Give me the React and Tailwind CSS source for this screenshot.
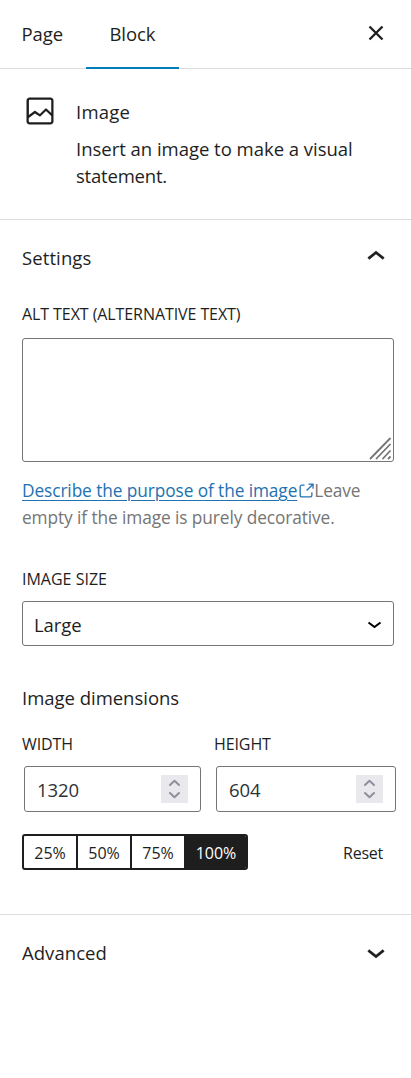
const Chevron = ({ up, className }) => (
  <svg viewBox="0 0 24 24" fill="currentColor" stroke="currentColor" strokeWidth=".3" className={className}>
    {up ? (
      <path d="M6.5 12.4L12 8l5.5 4.4-.9 1.2L12 10l-4.5 3.6-1-1.2z" />
    ) : (
      <path d="M17.5 11.6L12 16l-5.5-4.4.9-1.2L12 14l4.5-3.6 1 1.2z" />
    )}
  </svg>
);

const Label = ({ children, className }) => (
  <div className={`h-6 text-[16px] leading-6 whitespace-nowrap ${className}`}>{children}</div>
);

const NumberField = ({ value, className }) => (
  <div className={`flex h-[46px] items-center justify-between rounded-[3px] border border-[#757575] pr-3 pl-3 ${className}`}>
    <span className="pt-0.5 text-[18.5px] leading-6 tracking-[-0.1px] text-[#2c3338]">{value}</span>
    <span className="flex h-7 w-[27px] items-center justify-center bg-[#e9e9ed]">
      <svg viewBox="0 0 27 28" className="h-7 w-[27px]" fill="none" stroke="#8f8f9d" strokeWidth="2" strokeLinecap="round" strokeLinejoin="round">
        <path d="M9 10l4.500-4.300L18 10M9 18l4.500 4.300L18 18" />
      </svg>
    </span>
  </div>
);

const scales = [
  { label: "25%", style: "w-[54px] border-r-2" },
  { label: "50%", style: "w-[54px] border-r-2" },
  { label: "75%", style: "w-[52px]" },
  { label: "100%", style: "w-[62px] bg-[#1e1e1e] pl-0.5 text-white" },
];

export default function App() {
  return (
    <div className="h-[1078px] w-[411px] overflow-hidden bg-white font-['Open_Sans','Noto_Sans',sans-serif] text-[18.5px] leading-[27px] text-[#1e1e1e]">
      <header className="flex h-[69px] border-b border-[#ddd]">
        <div className="w-[86px] pt-5 pl-[21.5px] tracking-[-0.1px]">Page</div>
        <div className="h-[69px] w-[93px] border-b-2 border-[#007cba] pt-5 text-center tracking-[-0.05px]">Block</div>
        <div className="flex flex-1 items-start justify-end pt-[15px] pr-[17px]">
          <svg viewBox="0 0 36 36" className="size-9" fill="none" stroke="currentColor" strokeWidth="2.3">
            <path d="M11.500 11.500l13 13M24.500 11.500l-13 13" />
          </svg>
        </div>
      </header>

      <section className="flex h-[151px] border-b border-[#ddd] pt-[24px] pl-[22px]">
        <svg viewBox="0 0 24 24" className="size-9 shrink-0" fill="currentColor">
          <path d="M19 3H5c-1.1 0-2 .9-2 2v14c0 1.1.9 2 2 2h14c1.1 0 2-.9 2-2V5c0-1.1-.9-2-2-2zM5 4.5h14c.3 0 .5.2.5.5v8.4l-3-2.9c-.3-.3-.8-.3-1 0L11.9 14 9 12c-.3-.2-.6-.2-.8 0l-3.6 2.6V5c-.1-.3.1-.5.4-.5zm14 15H5c-.3 0-.5-.2-.5-.5v-2.400l4.100-3 3 1.900c.3.2.7.2.9-.1L16 12l3.500 3.400V19c0 .3-.2.5-.5.5z" />
        </svg>
        <div className="pt-[5px] pl-[18px]">
          <div className="mb-[10px] tracking-[0.25px]">Image</div>
          <div className="w-[310px] tracking-[-0.02px]">Insert an image to make a visual<br /><span className="tracking-[-0.2px]">statement.</span></div>
        </div>
      </section>

      <section className="h-[695px] border-b border-[#ddd] px-[22px] pt-[25px]">
        <div className="flex h-[27px] justify-between">
          <span className="-mt-px tracking-[0.1px]">Settings</span>
          <Chevron up className="-mt-[6px] -mr-[5px] size-9" />
        </div>
        <Label className="mt-[30px] tracking-[-0.08px]">ALT TEXT (ALTERNATIVE TEXT)</Label>
        <div className="mt-3 flex h-[124px] w-[372px] items-end justify-end rounded-[3px] border border-[#757575]">
          <svg viewBox="0 0 25 25" className="size-[25px]" fill="none" stroke="#757575" strokeWidth="1.8" strokeLinecap="round">
            <path d="M2.500 22.500L22 2.500M8.500 22.500L22 8.500M15 22.500L22 15M20.500 22.500L22 21" />
          </svg>
        </div>
        <p className="mt-[15px] text-[17.3px] leading-[27px] whitespace-nowrap text-[#757575]">
          <span className="flex items-center">
            <a className="tracking-[-0.09px] text-[#2271b1] underline decoration-1 underline-offset-[3px]">Describe the purpose of the image</a>
            <svg viewBox="0 0 24 24" className="-ml-px h-5 w-5 shrink-0 text-[#2271b1]" fill="currentColor">
              <path d="M18.2 17c0 .7-.6 1.2-1.2 1.2H7c-.7 0-1.2-.6-1.2-1.2V7c0-.7.6-1.2 1.2-1.2h3.2V4.200H7C5.500 4.200 4.200 5.500 4.200 7v10c0 1.500 1.200 2.800 2.800 2.800h10c1.500 0 2.800-1.200 2.800-2.800v-3.600h-1.500V17zM14.900 3v1.500h3.700l-6.400 6.400 1.100 1.100 6.400-6.400v3.700h1.500V3h-6.300z" />
            </svg>
            <span className="-ml-[2px] tracking-[-0.1px]">Leave</span>
          </span>
          <span className="tracking-[-0.09px]">empty if the image is purely decorative.</span>
        </p>
        <Label className="mt-9">IMAGE SIZE</Label>
        <div className="mt-[10px] flex h-[45px] w-[372px] items-center justify-between rounded-[3px] border border-[#757575] pr-[5px] pl-[11px]">
          <span className="pt-0.5 tracking-[-0.05px]">Large</span>
          <svg viewBox="0 0 27 27" className="mt-0.5 size-[27px]" fill="none" stroke="#000" strokeWidth="2">
            <path d="M7.500 11.500l6 4.500 6-4.500" />
          </svg>
        </div>
        <div className="mt-[38px] tracking-[-0.02px]">Image dimensions</div>
        <div className="mt-[21px] flex">
          <Label className="w-48 tracking-[-0.1px]">WIDTH</Label>
          <Label className="tracking-[-0.1px]">HEIGHT</Label>
        </div>
        <div className="mt-[10px] ml-0.5 flex gap-[15px]">
          <NumberField value="1320" className="w-[177px] shrink-0" />
          <NumberField value="604" className="w-[180px] shrink-0" />
        </div>
        <div className="mt-[22px] flex items-center justify-between pr-[6px] text-[16px]">
          <div className="flex h-9 overflow-hidden rounded-[3px] border-2 border-[#1e1e1e]">
            {scales.map(({ label, style }) => (
              <span key={label} className={`flex items-center justify-center border-[#1e1e1e] pt-0.5 ${style}`}>{label}</span>
            ))}
          </div>
          <span className="pt-0.5 tracking-[-0.25px]">Reset</span>
        </div>
      </section>

      <section className="flex justify-between px-[22px] pt-[25px]">
        <span className="-mt-px tracking-[0.05px]">Advanced</span>
        <Chevron className="-mt-[6px] -mr-[5px] size-9" />
      </section>
    </div>
  );
}
